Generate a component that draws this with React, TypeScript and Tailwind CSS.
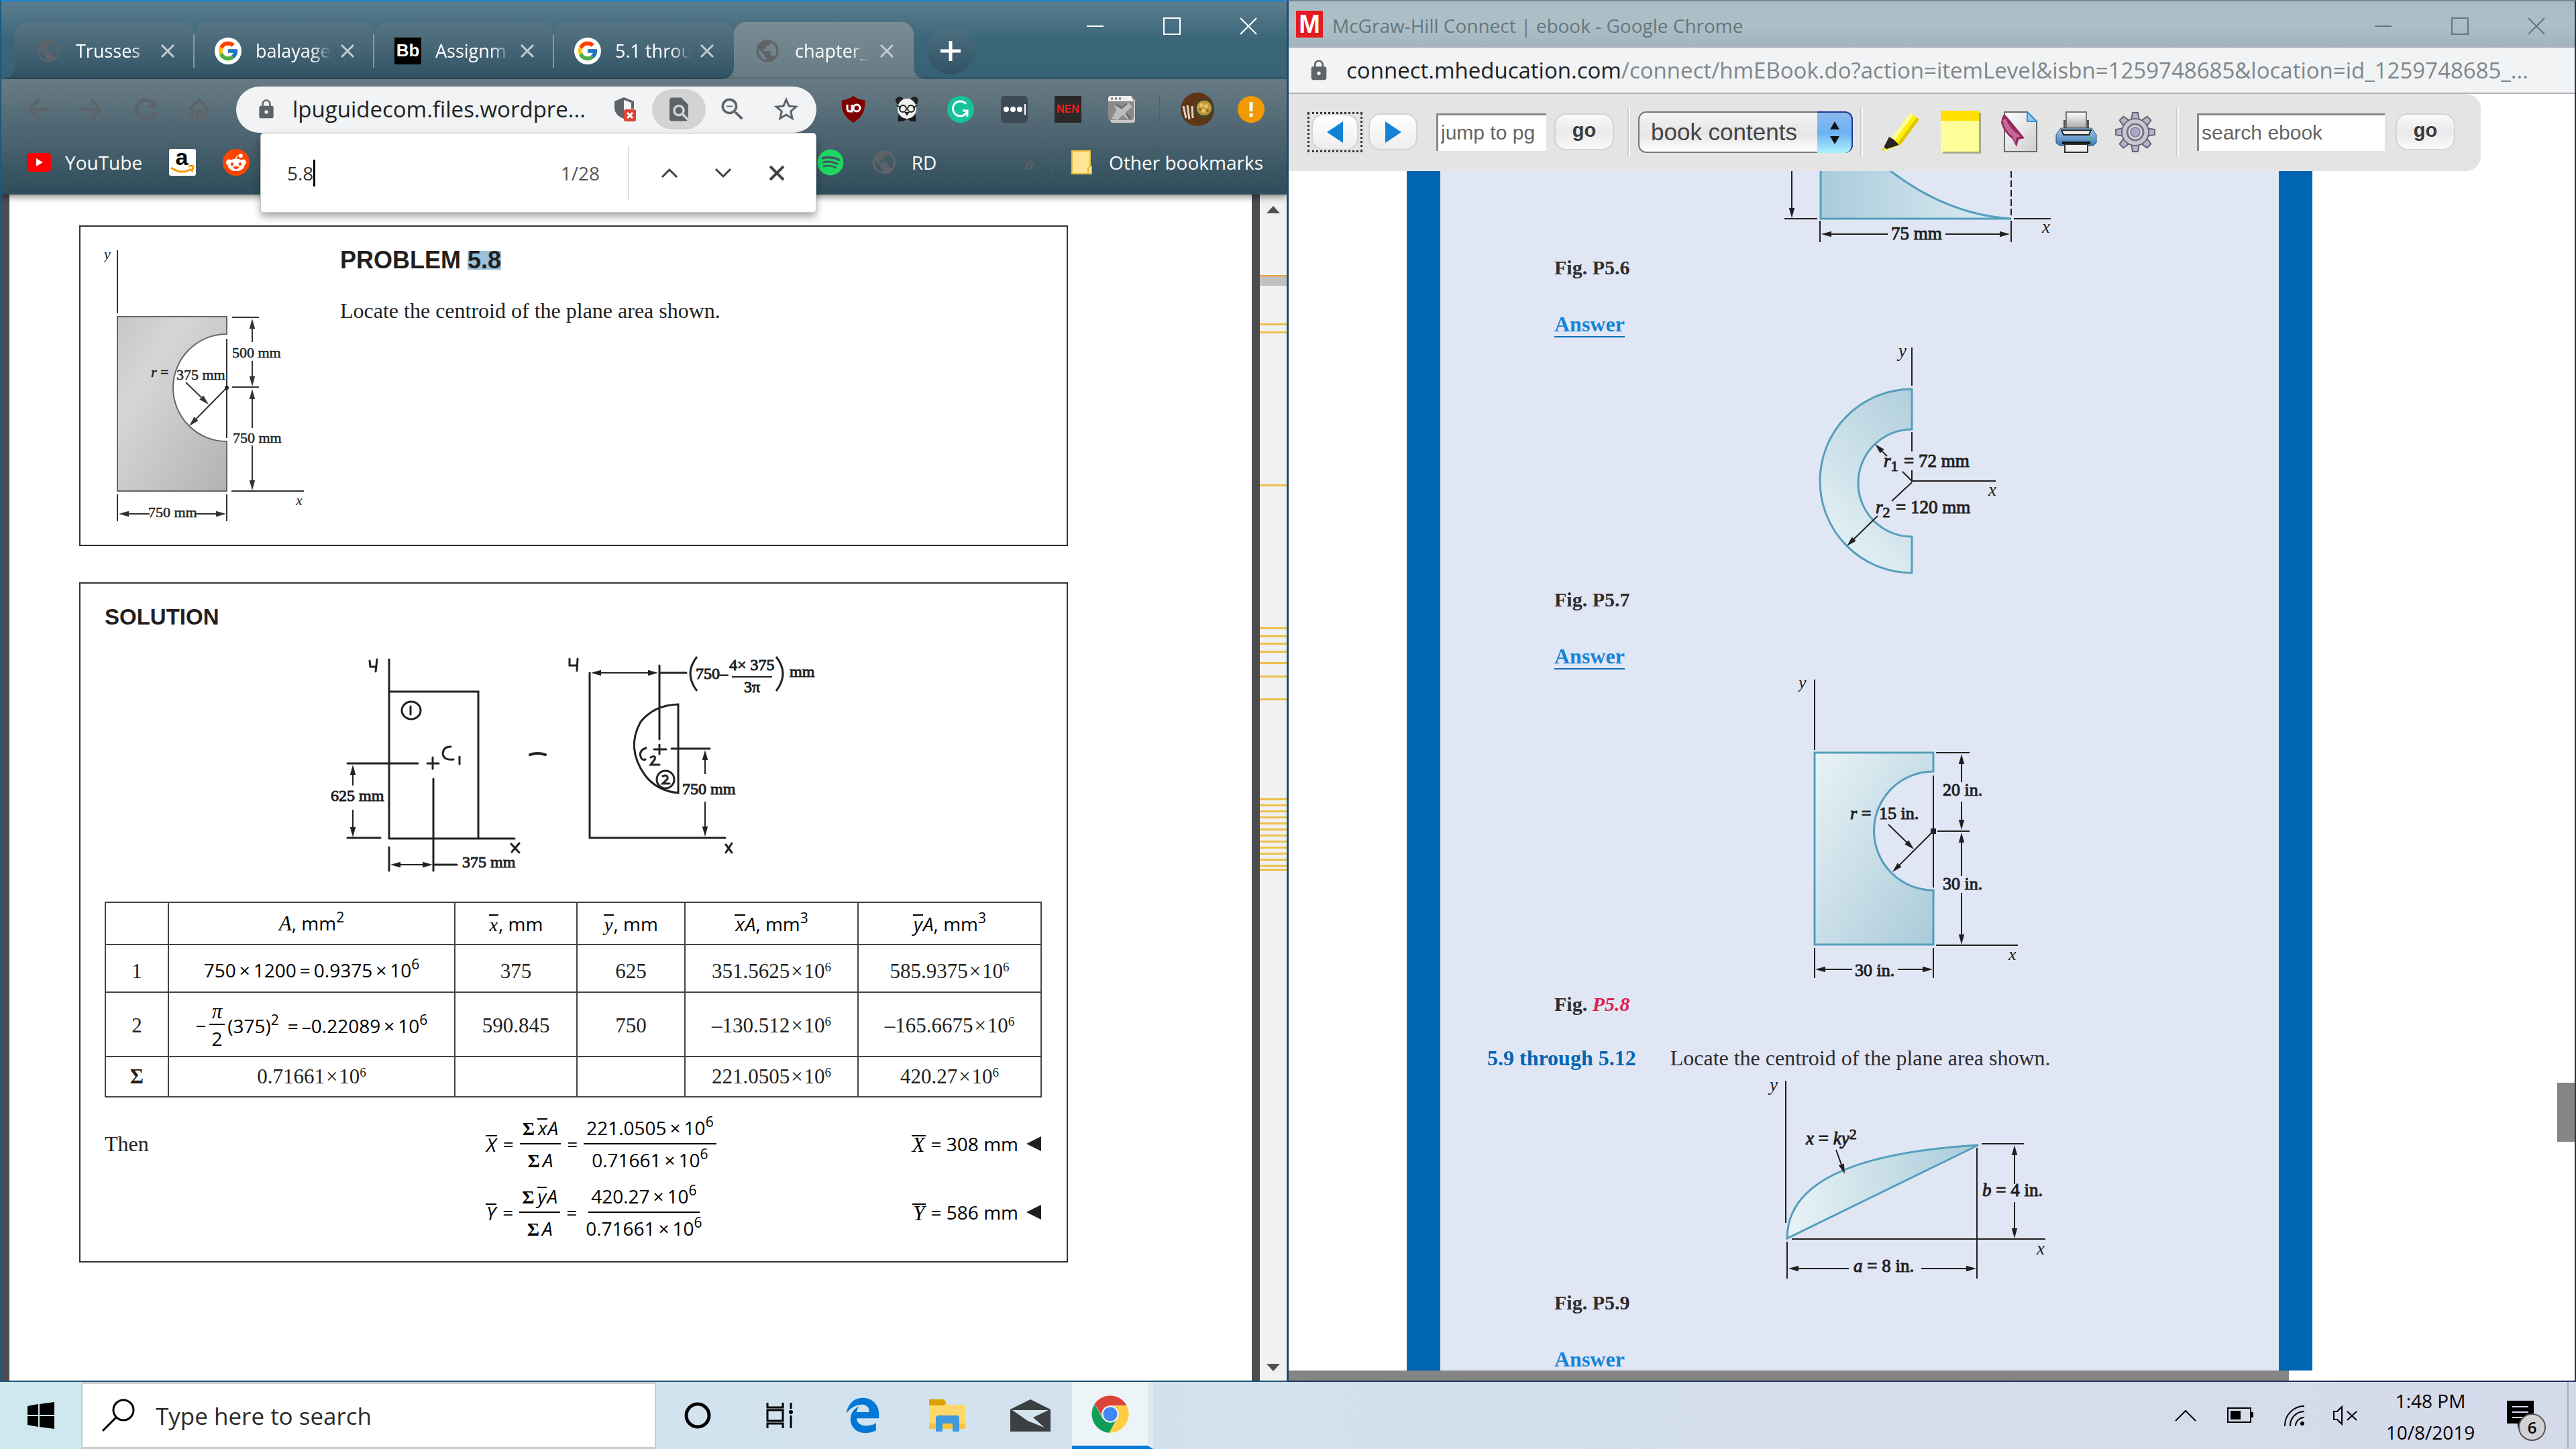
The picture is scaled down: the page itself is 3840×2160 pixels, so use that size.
import React from "react";
import type { ReactNode } from "react";
import { FcGoogle } from "react-icons/fc";
import { FaEdgeLegacy, FaRedditAlien, FaSpotify } from "react-icons/fa6";
import {
  MdArrowBack,
  MdArrowForward,
  MdFindInPage,
  MdLock,
  MdOutlineHome,
  MdPublic,
  MdRefresh,
  MdStarBorder,
  MdZoomOut,
} from "react-icons/md";

const UI = "font-['Open_Sans','Noto_Sans',sans-serif]";
const SERIF = "font-['Liberation_Serif',serif]";
const ARIAL = "font-['Liberation_Sans',sans-serif]";

/* ---------- small helpers ---------- */

function Arrow({ x1, y1, x2, y2, head = 15, color = "#231f20" }: { x1: number; y1: number; x2: number; y2: number; head?: number; color?: string }) {
  const a = Math.atan2(y2 - y1, x2 - x1);
  const bx = x2 - head * Math.cos(a);
  const by = y2 - head * Math.sin(a);
  const w = head * 0.28;
  const pts = `${x2},${y2} ${bx - w * Math.sin(a)},${by + w * Math.cos(a)} ${bx + w * Math.sin(a)},${by - w * Math.cos(a)}`;
  return (
    <g>
      <line x1={x1} y1={y1} x2={bx} y2={by} stroke={color} strokeWidth="2" />
      <polygon points={pts} fill={color} />
    </g>
  );
}

function WindowButtons({ color }: { color: string }) {
  return (
    <div className={`flex h-[74px] shrink-0 items-center ${color}`}>
      <button aria-label="Minimize" className="flex w-[114px] justify-center">
        <svg width="26" height="26" viewBox="0 0 26 26" stroke="currentColor" strokeWidth="2"><path d="M0 13H25" /></svg>
      </button>
      <button aria-label="Maximize" className="flex w-[114px] justify-center">
        <svg width="26" height="26" viewBox="0 0 26 26" fill="none" stroke="currentColor" strokeWidth="2"><rect x="1" y="1" width="24" height="24" /></svg>
      </button>
      <button aria-label="Close" className="flex w-[114px] justify-center">
        <svg width="26" height="26" viewBox="0 0 26 26" stroke="currentColor" strokeWidth="2"><path d="M1 1L25 25M25 1L1 25" /></svg>
      </button>
    </div>
  );
}

/* ---------- left browser chrome ---------- */

function GoogleIcon() {
  return (
    <span className="flex size-10 items-center justify-center rounded-full bg-white">
      <FcGoogle size={34} />
    </span>
  );
}

const globe = <MdPublic size={42} className="text-[#5f6368]" />;

const tabs: { title: string; icon: ReactNode }[] = [
  { title: "Trusses", icon: globe },
  { title: "balayage", icon: <GoogleIcon /> },
  { title: "Assignm", icon: <span className={`flex size-10 items-center justify-center bg-black text-[26px] font-bold text-white ${ARIAL}`}>Bb</span> },
  { title: "5.1 throu", icon: <GoogleIcon /> },
];

function CloseX() {
  return (
    <svg width="22" height="22" viewBox="0 0 22 22" stroke="currentColor" strokeWidth="3"><path d="M2 2L20 20M20 2L2 20" /></svg>
  );
}

function TabBody({ title, icon }: { title: string; icon: ReactNode }) {
  return (
    <>
      <span className="flex w-10 shrink-0 justify-center">{icon}</span>
      <span className="ml-[21px] w-[118px] text-left text-[27px] leading-[40px] whitespace-nowrap text-white [mask-image:linear-gradient(to_right,black_70%,transparent_96%)]">{title}</span>
    </>
  );
}

function TabStrip() {
  return (
    <div className="flex h-[116px] items-start bg-linear-to-b from-[#5a7e8f] via-[#3b6679] via-50% to-[#386377]">
      <div className="flex items-end pt-[31px] pl-[20px]" role="tablist">
        {tabs.map((t, i) => (
          <div key={t.title} className="relative flex h-[85px] w-[268px] items-center rounded-t-[18px] bg-linear-to-b from-[#587583] to-[#305365] pl-[30px]">
            {i === 0 && <span className="absolute bottom-0 -left-[18px] size-[18px] bg-[radial-gradient(circle_at_0_0,transparent_18px,#305365_18px)]" />}
            <button role="tab" className="flex items-center"><TabBody {...t} /></button>
            <button aria-label={`Close ${t.title}`} className="ml-2 text-[#c3ced4]"><CloseX /></button>
            {i < 3 && <span className="absolute top-[18px] right-0 h-[50px] w-[2px] bg-[#8499a3]" />}
          </div>
        ))}
        <div className="relative z-10 flex h-[85px] w-[268px] items-center rounded-t-[18px] bg-linear-to-b from-[#7a8d94] to-[#677b85] pl-[30px]">
          <span className="absolute bottom-0 -left-[18px] size-[18px] bg-[radial-gradient(circle_at_0_0,transparent_18px,#677b85_18px)]" />
          <span className="absolute -right-[18px] bottom-0 size-[18px] bg-[radial-gradient(circle_at_100%_0,transparent_18px,#677b85_18px)]" />
          <button role="tab" className="flex items-center"><TabBody title="chapter_" icon={globe} /></button>
          <button aria-label="Close chapter" className="ml-2 text-[#c3ced4]"><CloseX /></button>
        </div>
        <button aria-label="New tab" className="mb-[7px] ml-[20px] flex size-[70px] items-center justify-center rounded-full bg-linear-to-b from-[#4c7080] to-[#305365]">
          <svg width="30" height="30" viewBox="0 0 30 30" stroke="#fff" strokeWidth="5"><path d="M15 0V30M0 15H30" /></svg>
        </button>
      </div>
      <div className="ml-auto"><WindowButtons color="text-white" /></div>
    </div>
  );
}

function Cell({ children, label }: { children: ReactNode; label: string }) {
  return <button aria-label={label} className="flex h-[69px] w-20 shrink-0 items-center justify-center">{children}</button>;
}

function NavBar() {
  return (
    <div className="flex h-[90px] items-center pr-[13px] pl-[15px]">
      <div className="flex text-[#5f6368]">
        <Cell label="Back"><MdArrowBack size={48} /></Cell>
        <Cell label="Forward"><MdArrowForward size={48} /></Cell>
        <Cell label="Reload"><MdRefresh size={48} /></Cell>
        <Cell label="Home"><MdOutlineHome size={44} /></Cell>
      </div>
      <div className="ml-[15px] flex h-[69px] min-w-0 flex-1 items-center rounded-full bg-[#f1f3f4] pl-[29px] text-[#5f6368]">
        <MdLock size={32} className="shrink-0" />
        <input aria-label="Address" defaultValue="lpuguidecom.files.wordpre..." className="ml-[23px] min-w-0 flex-1 bg-transparent text-[33px] text-[#202124] outline-none" />
        <Cell label="Content blocked">
          <svg width="38" height="38" viewBox="0 0 38 38">
            <path d="M17 1L32 7V18H28V9L17 5V33Q3 28 3 16V7Z" fill="#5f6368" />
            <rect x="17" y="19" width="18" height="18" rx="3" fill="#db4437" />
            <path d="M22 24L30 32M30 24L22 32" stroke="#fff" strokeWidth="3" />
          </svg>
        </Cell>
        <button aria-label="Find in page" className="flex h-[60px] w-20 items-center justify-center rounded-full bg-[#d2d4d3]"><MdFindInPage size={42} /></button>
        <Cell label="Zoom"><MdZoomOut size={44} /></Cell>
        <span className="pr-[5px]"><Cell label="Bookmark"><MdStarBorder size={44} /></Cell></span>
      </div>
      <div className="ml-[15px] flex">
        <Cell label="uBlock">
          <svg width="40" height="40" viewBox="0 0 40 40">
            <path d="M20 0Q28 6 37 6Q40 28 20 40Q0 28 3 6Q12 6 20 0Z" fill="#800000" />
            <path d="M11 13V19Q11 23 15 23H18V13" fill="none" stroke="#fff" strokeWidth="3" />
            <circle cx="25" cy="18" r="5" fill="none" stroke="#fff" strokeWidth="3" />
          </svg>
        </Cell>
        <Cell label="Panda">
          <svg width="40" height="40" viewBox="0 0 40 40">
            <circle cx="9" cy="7" r="6" fill="#222" /><circle cx="31" cy="7" r="6" fill="#222" />
            <path d="M8 25L6 38H15L20 34L26 38H34L32 25Z" fill="#1c1c1c" />
            <ellipse cx="20" cy="19" rx="14" ry="15" fill="#f1f1f1" />
            <circle cx="14" cy="19" r="5" fill="none" stroke="#222" strokeWidth="2" /><circle cx="26" cy="19" r="5" fill="none" stroke="#222" strokeWidth="2" />
            <path d="M5 14L11 18M35 14L29 18M18 25H22L20 28Z" stroke="#222" strokeWidth="2" />
          </svg>
        </Cell>
        <Cell label="Grammarly">
          <svg width="40" height="40" viewBox="0 0 40 40">
            <circle cx="20" cy="20" r="20" fill="#15c39a" />
            <path d="M28 12A11 11 0 1 0 30 22H23M30 22V31" fill="none" stroke="#fff" strokeWidth="3" />
          </svg>
        </Cell>
        <Cell label="Password manager">
          <svg width="40" height="40" viewBox="0 0 40 40">
            <rect width="40" height="40" rx="5" fill="#3e4b57" />
            <circle cx="8" cy="20" r="4" fill="#fff" /><circle cx="18" cy="20" r="4" fill="#fff" /><circle cx="28" cy="20" r="4" fill="#fff" />
            <path d="M36 12V28" stroke="#fff" strokeWidth="2" />
          </svg>
        </Cell>
        <Cell label="New extension"><span className={`flex size-10 items-center justify-center bg-[#2a2829] text-[16px] font-bold text-[#f01e1e] ${ARIAL}`}>NEN</span></Cell>
        <Cell label="Image extension">
          <svg width="40" height="40" viewBox="0 0 40 40">
            <rect x="3" y="4" width="37" height="36" rx="4" fill="#c9c9c9" /><rect width="38" height="36" rx="4" fill="#8b8b8b" />
            <path d="M0 4Q0 0 4 0H34L38 8H0Z" fill="#eee" />
            <path d="M4 4H7M10 4H13M16 4H19" stroke="#777" strokeWidth="3" />
            <path d="M5 34L12 22L9 14L20 20L30 10L36 16L26 24L30 36L22 28L14 36Z" fill="#bdbdbd" />
            <path d="M12 12L20 18L28 12M26 26L34 34" stroke="#666" strokeWidth="2" fill="none" />
          </svg>
        </Cell>
      </div>
      <div className="mx-4 h-10 w-px bg-[#4d626d]" />
      <Cell label="Profile">
        <svg width="50" height="50" viewBox="0 0 50 50">
          <circle cx="25" cy="25" r="25" fill="#5e3517" />
          <path d="M4 20L8 38M10 19L13 40M17 20L18 38" stroke="#ddd4c6" strokeWidth="3" />
          <circle cx="35" cy="24" r="14" fill="#3c4a24" /><circle cx="35" cy="23" r="11" fill="#c29a3e" />
          <circle cx="31" cy="19" r="3" fill="#e6c466" /><circle cx="38" cy="20" r="3" fill="#e6c466" /><circle cx="34" cy="27" r="3" fill="#e6c466" /><circle cx="40" cy="27" r="2" fill="#8f6a1e" /><circle cx="29" cy="25" r="2" fill="#8f6a1e" />
        </svg>
      </Cell>
      <Cell label="Update">
        <svg width="40" height="40" viewBox="0 0 40 40"><circle cx="20" cy="20" r="20" fill="#f29900" /><path d="M20 9V23M20 26V31" stroke="#fff" strokeWidth="5" /></svg>
      </Cell>
    </div>
  );
}

function BookmarkBar() {
  return (
    <div className="flex h-[68px] items-center pr-[35px] pl-[38px] text-[28px] text-white">
      <a href="#youtube" className="flex items-center gap-[21px]">
        <svg width="36" height="28" viewBox="0 0 36 28"><rect width="36" height="28" rx="5" fill="#f00" /><path d="M14 8L24 14L14 20Z" fill="#fff" /></svg>
        YouTube
      </a>
      <a href="#amazon" aria-label="Amazon" className="ml-[40px]">
        <svg width="40" height="40" viewBox="0 0 40 40">
          <rect width="40" height="40" rx="3" fill="#fff" />
          <text x="19" y="24" textAnchor="middle" fontSize="34" fontWeight="bold" fontFamily="Liberation Sans, sans-serif">a</text>
          <path d="M3 28Q18 39 33 30M29 26Q37 24 36 27L34 34" fill="none" stroke="#f90" strokeWidth="3" />
        </svg>
      </a>
      <a href="#reddit" aria-label="Reddit" className="ml-10 flex size-10 items-center justify-center rounded-full bg-[#ff4500]"><FaRedditAlien size={30} /></a>
      <a href="#spotify" aria-label="Spotify" className="ml-auto"><FaSpotify size={40} className="text-[#1ed760]" /></a>
      <a href="#rd" className="ml-[39px] flex items-center gap-[20px]">{globe}RD</a>
      <button aria-label="More bookmarks" className="ml-[129px] text-[34px] leading-none text-[#5f6368]">»</button>
      <div className="mx-[27px] h-10 w-px bg-[#465f6b]" />
      <button className="flex items-center gap-[25px]">
        <svg width="31" height="36" viewBox="0 0 31 36"><path d="M1 1H28V24H30V35H1Z" fill="#ffe591" stroke="#e9bd3c" strokeWidth="2" /><path d="M25 35V26L28 24" fill="none" stroke="#e9bd3c" strokeWidth="2" /></svg>
        Other bookmarks
      </button>
    </div>
  );
}

function FindBox() {
  return (
    <div className="absolute top-[196px] left-[386px] z-20 flex h-[119px] w-[829px] items-center rounded-[5px] border border-[#c6c9cb] bg-white pl-[39px] text-[28px] text-[#333] shadow-[0_6px_12px_rgba(0,0,0,0.35)]">
      <div className="flex flex-1 items-center">
        <span>5.8</span>
        <span className="h-10 w-[3px] bg-black" />
      </div>
      <span className="mr-[42px] text-[#555]">1/28</span>
      <div className="h-20 w-px bg-[#ccc]" />
      <div className="flex pr-[18px] pl-[21px] text-[#404346]">
        <Cell label="Previous"><svg width="26" height="16" viewBox="0 0 26 16" fill="none" stroke="currentColor" strokeWidth="3"><path d="M2 14L13 3L24 14" /></svg></Cell>
        <Cell label="Next"><svg width="26" height="16" viewBox="0 0 26 16" fill="none" stroke="currentColor" strokeWidth="3"><path d="M2 2L13 13L24 2" /></svg></Cell>
        <Cell label="Close find bar"><svg width="24" height="24" viewBox="0 0 24 24" stroke="currentColor" strokeWidth="4"><path d="M2 2L22 22M22 2L2 22" /></svg></Cell>
      </div>
    </div>
  );
}

/* ---------- PDF page ---------- */

function ProblemFigure() {
  const g = "#333";
  return (
    <svg width="298" height="404" viewBox="156 373 298 404" fontFamily="Liberation Serif, serif" fontSize="22" fill="#222" className="shrink-0">
      <defs>
        <linearGradient id="gray" x1="0" y1="0" x2="1" y2="1"><stop offset="0" stopColor="#c6c6c6" /><stop offset=".3" stopColor="#d6d6d6" /><stop offset="1" stopColor="#b2b2b2" /></linearGradient>
      </defs>
      <text x="156" y="386" fontStyle="italic">y</text>
      <path d="M339 472H176V732H339V658A80 80 0 0 1 339 498Z" fill="url(#gray)" stroke="#666" strokeWidth="2" />
      <path d="M176 373V467M339 505V653M347 473H387M347 577H387M346 732H454M176 737V777M339 737V777" stroke={g} strokeWidth="2" />
      <Arrow x1={377} y1={510} x2={377} y2={475} color={g} />
      <Arrow x1={377} y1={538} x2={377} y2={576} color={g} />
      <Arrow x1={377} y1={638} x2={377} y2={580} color={g} />
      <Arrow x1={377} y1={664} x2={377} y2={731} color={g} />
      <Arrow x1={278} y1={570} x2={312} y2={603} color={g} />
      <Arrow x1={339} y1={578} x2={283} y2={635} color={g} />
      <Arrow x1={224} y1={766} x2={178} y2={766} color={g} />
      <Arrow x1={291} y1={766} x2={338} y2={766} color={g} />
      <circle cx="339" cy="578" r="3" />
      <g stroke="#222" strokeWidth="0.500">
        <text x="347" y="533">500 mm</text>
        <text x="348" y="660">750 mm</text>
        <text x="226" y="562"><tspan fontStyle="italic">r</tspan> =</text>
        <text x="264" y="566">375 mm</text>
        <text x="222" y="771">750 mm</text>
      </g>
      <text x="442" y="753" fontStyle="italic">x</text>
    </svg>
  );
}

function SolutionSketch() {
  const hand = { fill: "none", stroke: "#222", strokeWidth: 3, strokeLinecap: "round" as const };
  const c = "#222";
  return (
    <svg width="728" height="326" viewBox="494 973 728 326" fontFamily="Liberation Serif, serif" fontSize="24" fill="#222" className="ml-[337px]">
      <g {...hand}>
        <path d="M581 982V1249M581 1030H714V1249M581 1249H768M519 1137H624M519 1248H568M647 1160V1297M581 1262V1297M647 1288H682" />
        <path d="M552 984L553 993H562M563 982L561 1000M763 1257L775 1270M775 1256L764 1269" />
        <ellipse cx="614" cy="1058" rx="14" ry="13" /><path d="M613 1052V1064" />
        <path d="M646 1128V1145M638 1137H655M673 1112Q662 1112 661 1122Q662 1133 677 1131M686 1127V1138" />
        <path d="M791 1124Q802 1120 814 1124" strokeWidth="4" />
        <path d="M850 981L850 991L860 991M862 981L861 999M880 1002V1248M880 1248H1082M984 991V1101M984 1002H1024M1002 1115H1059" />
        <path d="M1012 1049V1181Q980 1178 962 1154Q934 1114 956 1075Q976 1050 1012 1049Z" />
        <path d="M984 1109V1123M976 1116H994M964 1114Q953 1118 956 1127Q958 1133 963 1131M971 1128Q979 1124 977 1131L971 1139H984" />
        <ellipse cx="993" cy="1161" rx="13" ry="13" /><path d="M989 1156Q997 1153 996 1160L989 1167H999" />
        <path d="M1083 1258L1092 1270M1092 1256L1083 1270" />
      </g>
      <Arrow x1={527} y1={1170} x2={527} y2={1139} color={c} />
      <Arrow x1={527} y1={1206} x2={527} y2={1247} color={c} />
      <Arrow x1={614} y1={1288} x2={583} y2={1288} color={c} />
      <Arrow x1={614} y1={1288} x2={646} y2={1288} color={c} />
      <Arrow x1={930} y1={1002} x2={882} y2={1002} color={c} />
      <Arrow x1={930} y1={1002} x2={982} y2={1002} color={c} />
      <Arrow x1={1052} y1={1153} x2={1052} y2={1117} color={c} />
      <Arrow x1={1052} y1={1194} x2={1052} y2={1246} color={c} />
      <g stroke="#222" strokeWidth="1">
        <text x="494" y="1193">625 mm</text>
        <text x="690" y="1292">375 mm</text>
        <text x="1018" y="1183">750 mm</text>
        <text x="1038" y="1011">750–</text>
        <text x="1088" y="998">4× 375</text>
        <text x="1110" y="1031">3π</text>
        <text x="1178" y="1008">mm</text>
      </g>
      <path d="M1040 978Q1020 1003 1040 1029M1158 978Q1178 1003 1158 1029" fill="none" stroke="#222" strokeWidth="3" />
      <path d="M1092 1008H1152" stroke="#222" strokeWidth="2" />
    </svg>
  );
}

function Bar({ children }: { children: ReactNode }) {
  return <span className="inline-block border-t-2 border-black px-px leading-[24px] italic">{children}</span>;
}
function Sup({ children }: { children: ReactNode }) {
  return <sup className="-top-[12px] text-[21px]">{children}</sup>;
}
function Op({ children }: { children: ReactNode }) {
  return <span className="mx-[5px]">{children}</span>;
}
function Frac({ top, bottom }: { top: ReactNode; bottom: ReactNode }) {
  return (
    <span className="inline-flex flex-col items-center text-center">
      <span className="h-[48px] border-b-2 border-black px-1 leading-[46px] whitespace-nowrap">{top}</span>
      <span className="h-[46px] px-1 leading-[46px] whitespace-nowrap">{bottom}</span>
    </span>
  );
}
const Sigma = () => <span className={`mr-[4px] font-bold ${SERIF}`}>Σ</span>;
const Ten = () => <><span className="mx-[2px]">×</span>10<sup className="-top-[10px] text-[19px]">6</sup></>;

function ResultsTable() {
  const td = "border-2 border-[#444] p-0 text-center font-normal whitespace-nowrap";
  const it = `italic ${SERIF}`;
  return (
    <table className={`mt-[44px] w-full table-fixed border-collapse text-[31px] leading-[40px] text-[#231f20] ${SERIF}`}>
      <colgroup>
        <col className="w-[94px]" /><col className="w-[427px]" /><col className="w-[182px]" /><col className="w-[161px]" /><col className="w-[258px]" /><col className="w-[273px]" />
      </colgroup>
      <thead>
        <tr className={`h-[63px] text-[28px] text-black ${UI}`}>
          <th className={td}></th>
          <th className={td}><span className={`text-[31px] ${it}`}>A</span>, mm<Sup>2</Sup></th>
          <th className={td}><Bar><span className={SERIF}>x</span></Bar>, mm</th>
          <th className={td}><Bar><span className={SERIF}>y</span></Bar>, mm</th>
          <th className={td}><Bar>x</Bar><i>A</i>, mm<Sup>3</Sup></th>
          <th className={td}><Bar>y</Bar><i>A</i>, mm<Sup>3</Sup></th>
        </tr>
      </thead>
      <tbody>
        <tr className="h-[71px]">
          <td className={`${td} pt-2`}>1</td>
          <td className={`${td} pt-1 text-[28px] text-black ${UI}`}>750<Op>×</Op>1200<Op>=</Op>0.9375<Op>×</Op>10<Sup>6</Sup></td>
          <td className={`${td} pt-2`}>375</td><td className={`${td} pt-2`}>625</td>
          <td className={`${td} pt-2`}>351.5625<Ten /></td><td className={`${td} pt-2`}>585.9375<Ten /></td>
        </tr>
        <tr className="h-[96px]">
          <td className={`${td} pt-1`}>2</td>
          <td className={`${td} text-[28px] text-black ${UI}`}>
            <div className="flex items-center justify-center pt-1">
              <span>−</span>
              <span className="mx-1 inline-flex flex-col text-center"><span className={`border-b-2 border-black px-1 text-[31px] leading-[36px] ${it}`}>π</span><span className="leading-[40px]">2</span></span>
              <span>(375)<Sup>2</Sup><span className="ml-[8px]"><Op>=</Op></span>–0.22089<Op>×</Op>10<Sup>6</Sup></span>
            </div>
          </td>
          <td className={`${td} pt-1`}>590.845</td><td className={`${td} pt-1`}>750</td>
          <td className={`${td} pt-1`}>–130.512<Ten /></td><td className={`${td} pt-1`}>–165.6675<Ten /></td>
        </tr>
        <tr className="h-[60px]">
          <td className={td}><b>Σ</b></td>
          <td className={td}>0.71661<Ten /></td><td className={td}></td><td className={td}></td>
          <td className={td}>221.0505<Ten /></td><td className={td}>420.27<Ten /></td>
        </tr>
      </tbody>
    </table>
  );
}

function Result({ v, n }: { v: string; n: string }) {
  return (
    <span className="flex items-center">
      <Bar><span className={`text-[31px] ${SERIF}`}>{v}</span></Bar>
      <span className="ml-2">= {n} mm</span>
      <svg width="22" height="22" viewBox="0 0 22 22" className="ml-[12px]"><path d="M0 11L22 0V22Z" fill="#231f20" /></svg>
    </span>
  );
}

function EquationRow({ lead, big, small, top, n }: { lead?: string; big: string; small: string; top: string; n: string }) {
  return (
    <div className={`flex items-center text-[28px] leading-[40px] text-black ${UI}`}>
      <span className={`w-[568px] text-[32px] text-[#231f20] ${SERIF}`}>{lead}</span>
      <span className="flex flex-1 items-center">
        <Bar>{big}</Bar>
        <span className="mx-[9px]">=</span>
        <Frac top={<><Sigma /><Bar>{small}</Bar><i>A</i></>} bottom={<><Sigma /><i>A</i></>} />
        <span className="mx-[9px]">=</span>
        <Frac top={<>{top}<Op>×</Op>10<Sup>6</Sup></>} bottom={<>0.71661<Op>×</Op>10<Sup>6</Sup></>} />
      </span>
      <Result v={big} n={n} />
    </div>
  );
}

function PdfPage() {
  return (
    <div className="min-w-0 flex-1 overflow-hidden bg-white pt-[46px] pr-[274px] pl-[104px]">
      <section className="flex border-2 border-[#333] px-[35px] pt-[35px] pb-[35px]">
        <ProblemFigure />
        <div className="-mt-[5px] ml-[54px] text-[#231f20]">
          <h1 className={`text-[36px] leading-[40px] font-bold ${ARIAL}`}>PROBLEM <mark className="inline-block h-7 bg-[#99c1da] leading-[28px] text-[#231f20]">5.8</mark></h1>
          <p className={`mt-[35px] text-[32px] leading-[40px] ${SERIF}`}>Locate the centroid of the plane area shown.</p>
        </div>
      </section>
      <section className="mt-[54px] border-2 border-[#333] pt-[30px] pr-[38px] pb-[26px] pl-[36px]">
        <h2 className={`mb-[34px] text-[33px] leading-[40px] font-bold text-[#231f20] ${ARIAL}`}>SOLUTION</h2>
        <SolutionSketch />
        <ResultsTable />
        <div className="mt-[22px] flex flex-col gap-2">
          <EquationRow lead="Then" big="X" small="x" top="221.0505" n="308" />
          <EquationRow big="Y" small="y" top="420.27" n="586" />
        </div>
      </section>
    </div>
  );
}

const findMarks = [192, 204, 432, 645, 657, 668, 680, 697, 717, 751, 900, 909, 918, 927, 936, 945, 954, 963, 972, 981, 990, 999, 1005];

function PdfScrollbar() {
  return (
    <div className="relative flex w-10 shrink-0 flex-col items-center justify-between bg-[#f1f1f1] pt-[17px] pb-[14px]">
      <svg width="20" height="11" viewBox="0 0 20 11"><path d="M0 11L10 0L20 11Z" fill="#505050" /></svg>
      <svg width="20" height="11" viewBox="0 0 20 11"><path d="M0 0L10 11L20 0Z" fill="#505050" /></svg>
      <span className="absolute top-[120px] left-0 h-[16px] w-full border-t-2 border-[#e8a13a] bg-[#c1c1c1]" />
      {findMarks.map((m) => (
        <span key={m} className="absolute left-0 h-[3px] w-full bg-[#edc04b]" style={{ top: m }} />
      ))}
    </div>
  );
}

function PdfWindow() {
  return (
    <section aria-label="PDF viewer" className={`relative flex w-1/2 flex-col overflow-hidden border-t-2 border-r-2 border-b-2 border-l-2 border-t-[#1883d7] border-r-[#1f4a68] border-b-[#1b5572] border-l-[#1c5a7c] ${UI}`}>
      <TabStrip />
      <div className="relative z-10 shrink-0 bg-linear-to-b from-[#677b85] via-[#4c6470] via-50% to-[#2e4c5a] pb-[14px] shadow-[0_3px_10px_rgba(0,0,0,0.5)]">
        <NavBar />
        <BookmarkBar />
      </div>
      <FindBox />
      <div className="flex min-h-0 flex-1">
        <div className="w-3 shrink-0 bg-[#4a4c4f]" />
        <PdfPage />
        <div className="w-3 shrink-0 bg-[#4a4c4f]" />
        <PdfScrollbar />
      </div>
    </section>
  );
}

/* ---------- ebook window ---------- */

const figText = { fontFamily: "Liberation Serif, serif", fontSize: 27, fill: "#231f20" };
const ink = { fill: "none", stroke: "#231f20", strokeWidth: 2 };
const edge = { stroke: "#559fba", strokeWidth: 3 };

function Fig56() {
  return (
    <svg width="400" height="106" viewBox="2660 255 400 106" {...figText} className="ml-[513px]">
      <defs><linearGradient id="g56"><stop offset="0" stopColor="#a9cbdd" /><stop offset="1" stopColor="#e0eef2" /></linearGradient></defs>
      <path d="M2714 250V326H2998Q2900 320 2812 250Z" fill="url(#g56)" {...edge} />
      <path d="M2660 326H2709M3002 326H3057M2713 329V361M2998 329V361" {...ink} />
      <path d="M2998 255V323" {...ink} strokeDasharray="10 4" />
      <Arrow x1={2671} y1={250} x2={2671} y2={325} />
      <Arrow x1={2814} y1={349} x2={2715} y2={349} />
      <Arrow x1={2900} y1={349} x2={2996} y2={349} />
      <text x="2819" y="357" stroke="#231f20" strokeWidth="1">75 mm</text>
      <text x="3044" y="347" fontStyle="italic">x</text>
    </svg>
  );
}

function Fig57() {
  return (
    <svg width="290" height="338" viewBox="2708 519 290 338" {...figText} className="mt-[15px] ml-[561px]">
      <defs><linearGradient id="g57" x1=".9" y1="0" x2=".4" y2="1"><stop offset="0" stopColor="#b3d0de" /><stop offset="1" stopColor="#e4f1f4" /></linearGradient></defs>
      <path d="M2850 581A137 137 0 0 0 2850 855V801A80 80 0 0 1 2850 641Z" fill="url(#g57)" {...edge} />
      <path d="M2850 519V576M2850 645V674M2850 702V718H2975M2850 718L2836 704M2850 720L2820 748" {...ink} />
      <Arrow x1={2813} y1={681} x2={2795} y2={663} />
      <Arrow x1={2799} y1={770} x2={2753} y2={815} />
      <text x="2830" y="533" fontStyle="italic">y</text>
      <text x="2964" y="740" fontStyle="italic">x</text>
      <g stroke="#231f20" strokeWidth="1">
        <text x="2808" y="697"><tspan fontStyle="italic">r</tspan><tspan dy="6" fontSize="22">1</tspan></text>
        <text x="2838" y="697">= 72 mm</text>
        <text x="2796" y="766"><tspan fontStyle="italic">r</tspan><tspan dy="6" fontSize="22">2</tspan></text>
        <text x="2826" y="766">= 120 mm</text>
      </g>
    </svg>
  );
}

function Fig58() {
  return (
    <svg width="330" height="446" viewBox="2680 1015 330 446" {...figText} fontSize={26} className="mt-[15px] ml-[533px]">
      <defs><linearGradient id="g58" x1="0" y1="0" x2="1" y2="1"><stop offset="0" stopColor="#e9f3f6" /><stop offset="1" stopColor="#a9cad9" /></linearGradient></defs>
      <path d="M2882 1124H2705V1410H2882V1329A88 88 0 0 1 2882 1152Z" fill="url(#g58)" {...edge} />
      <path d="M2705 1015V1120M2882 1158V1325M2886 1124H2936M2888 1241H2936M2886 1411H3008M2705 1415V1460M2882 1415V1460" {...ink} />
      <Arrow x1={2924} y1={1168} x2={2924} y2={1126} />
      <Arrow x1={2924} y1={1197} x2={2924} y2={1239} />
      <Arrow x1={2924} y1={1308} x2={2924} y2={1243} />
      <Arrow x1={2924} y1={1333} x2={2924} y2={1410} />
      <Arrow x1={2815} y1={1231} x2={2853} y2={1268} />
      <Arrow x1={2882} y1={1241} x2={2821} y2={1302} />
      <Arrow x1={2761} y1={1447} x2={2706} y2={1447} />
      <Arrow x1={2829} y1={1447} x2={2881} y2={1447} />
      <rect x="2878" y="1237" width="8" height="8" />
      <text x="2681" y="1028" fontStyle="italic">y</text>
      <text x="2994" y="1433" fontStyle="italic">x</text>
      <g stroke="#231f20" strokeWidth="1">
        <text x="2896" y="1188">20 in.</text>
        <text x="2896" y="1328">30 in.</text>
        <text x="2758" y="1223"><tspan fontStyle="italic">r</tspan> =</text>
        <text x="2801" y="1223">15 in.</text>
        <text x="2765" y="1457">30 in.</text>
      </g>
    </svg>
  );
}

function Fig59() {
  return (
    <svg width="420" height="296" viewBox="2636 1612 420 296" {...figText} className="mt-[16px] -mb-[3px] ml-[489px]">
      <defs><linearGradient id="g59"><stop offset="0" stopColor="#e9f3f6" /><stop offset="1" stopColor="#a9cbd9" /></linearGradient></defs>
      <path d="M2664 1847Q2664 1725 2949 1708Z" fill="url(#g59)" {...edge} />
      <path d="M2662 1612V1824M2671 1848H3049M2954 1706H3017M2947 1712V1907M2664 1852V1907" {...ink} />
      <Arrow x1={2737} y1={1715} x2={2750} y2={1751} />
      <Arrow x1={3003} y1={1766} x2={3003} y2={1708} />
      <Arrow x1={3003} y1={1793} x2={3003} y2={1847} />
      <Arrow x1={2756} y1={1892} x2={2666} y2={1892} />
      <Arrow x1={2864} y1={1892} x2={2946} y2={1892} />
      <text x="2638" y="1627" fontStyle="italic">y</text>
      <text x="3036" y="1871" fontStyle="italic">x</text>
      <g stroke="#231f20" strokeWidth="1">
        <text x="2692" y="1707"><tspan fontStyle="italic">x</tspan> = <tspan fontStyle="italic">ky</tspan><tspan dy="-8" fontSize="22">2</tspan></text>
        <text x="2955" y="1784"><tspan fontStyle="italic">b</tspan> = 4 in.</text>
        <text x="2763" y="1897"><tspan fontStyle="italic">a</tspan> = 8 in.</text>
      </g>
    </svg>
  );
}

function Caption({ children }: { children: ReactNode }) {
  return <p className="mt-[20px] ml-[170px] text-[30px] leading-[36px] font-bold">{children}</p>;
}
function Answer() {
  return (
    <a href="#answer" className="mt-[48px] ml-[170px] block w-fit border-b-2 border-[#0f6fb9] text-[32px] leading-[36px] font-bold text-[#1583d8]">Answer</a>
  );
}

function GoButton({ label }: { label: string }) {
  return (
    <button aria-label={label} className={`h-[55px] w-[89px] rounded-[18px] border-2 border-[#d4d4d4] bg-linear-to-b from-[#fafafa] via-[#eaeaea] to-[#fafafa] pb-1 text-[29px] leading-none font-bold text-[#3a3a3a] ${ARIAL}`}>go</button>
  );
}
const Divider = ({ className = "" }: { className?: string }) => <div className={`h-[75px] w-1 shrink-0 border-l-2 border-[#cfcfcf] bg-white ${className}`} />;
const field = `h-[56px] shrink-0 border-t-[3px] border-l-[3px] border-[#888] bg-white px-1 text-[30px] text-[#666] outline-none placeholder:text-[#666] placeholder:opacity-100 ${ARIAL}`;

function EbookToolbar() {
  return (
    <div className="flex h-[115px] w-[1777px] max-w-full items-center rounded-r-[22px] bg-[#e4e4e4] pb-[2px] pl-[28px]">
      <div className="shrink-0 border-[3px] border-dotted border-[#333] px-[3px]">
        <button aria-label="Previous page" className="flex h-[54px] w-[70px] items-center justify-center rounded-[18px] border-2 border-[#d4d4d4] bg-linear-to-b from-white to-[#ededed]">
          <svg width="24" height="32" viewBox="0 0 24 32"><path d="M0 16L24 0V32Z" fill="#1383d6" /></svg>
        </button>
      </div>
      <button aria-label="Next page" className="ml-[9px] flex h-[55px] w-[73px] shrink-0 items-center justify-center rounded-[18px] border-2 border-[#d4d4d4] bg-linear-to-b from-white to-[#ededed]">
        <svg width="24" height="32" viewBox="0 0 24 32"><path d="M24 16L0 0V32Z" fill="#1383d6" /></svg>
      </button>
      <input aria-label="Page number" placeholder="jump to pg" className={`ml-[28px] w-[164px] ${field}`} />
      <div className="ml-[12px] shrink-0"><GoButton label="Go to page" /></div>
      <Divider className="ml-[20px]" />
      <div className="relative ml-[12px] shrink-0">
        <select aria-label="Book contents" className={`h-[62px] w-[320px] appearance-none rounded-[12px] border-2 border-[#777] bg-linear-to-b from-[#f4f4f4] via-[#e6e6e6] via-55% to-white pl-[17px] text-[35px] leading-none text-[#444] ${ARIAL}`}>
          <option>book contents</option>
        </select>
        <span className="pointer-events-none absolute top-0 right-0 flex h-[62px] w-[53px] items-center justify-center rounded-r-[12px] border-t-2 border-r-2 border-[#1f3c96] bg-linear-to-b from-[#8db8ee] via-[#6cb2f2] to-[#aef0ff]">
          <svg width="14" height="34" viewBox="0 0 14 34"><path d="M7 0L14 12H0ZM7 34L14 22H0Z" fill="#111" /></svg>
        </span>
      </div>
      <Divider className="ml-[11px]" />
      <button aria-label="Highlight" className="ml-[24px] shrink-0">
        <svg width="66" height="62" viewBox="0 0 66 62">
          <path d="M10 58L18 40L47 2L60 12L32 50Z" fill="#fff200" />
          <path d="M18 40L47 2L51 5L23 44Z" fill="#fffb9a" /><path d="M56 9L60 12L32 50L28 47Z" fill="#e0c400" />
          <path d="M5 58L15 38L22 42L30 50L12 56Z" fill="#2b2426" /><path d="M5 60L7 53L12 57Z" fill="#fff200" />
        </svg>
      </button>
      <button aria-label="Add note" className="ml-[26px] shrink-0">
        <svg width="60" height="64" viewBox="0 0 60 64"><rect x="3" y="3" width="57" height="61" fill="#a9a990" /><rect width="57" height="61" fill="#ffff99" /><rect width="57" height="15" fill="#ffde00" /></svg>
      </button>
      <button aria-label="Bookmark page" className="ml-[27px] shrink-0">
        <svg width="58" height="64" viewBox="0 0 58 64">
          <defs><linearGradient id="page" x1="0" y1="0" x2="1" y2="1"><stop offset="0" stopColor="#fff" /><stop offset="1" stopColor="#ccc" /></linearGradient></defs>
          <path d="M8 2H42L56 16V61H8Z" fill="url(#page)" stroke="#6a6a6a" strokeWidth="2" />
          <path d="M42 2L56 16H42Z" fill="#8fc9f5" stroke="#3b8fcf" strokeWidth="2" />
          <path d="M8 5Q4 8 3 18Q8 34 20 42L26 54L29 43L38 41L16 14Z" fill="#962a60" /><path d="M5 14Q8 30 20 38L24 48L26 40L32 38Q16 28 10 12Z" fill="#c7689a" />
        </svg>
      </button>
      <button aria-label="Print" className="ml-[26px] shrink-0">
        <svg width="62" height="64" viewBox="0 0 62 64">
          <defs>
            <linearGradient id="sheet" x1="0" y1="0" x2="0" y2="1"><stop offset="0" stopColor="#fff" /><stop offset="1" stopColor="#a9a9a9" /></linearGradient>
            <linearGradient id="body" x1="0" y1="0" x2="0" y2="1"><stop offset="0" stopColor="#a8cdf0" /><stop offset="1" stopColor="#3f78b8" /></linearGradient>
          </defs>
          <path d="M12 14H50V32H12Z" fill="#555" /><path d="M16 2H46V26H16Z" fill="url(#sheet)" stroke="#777" strokeWidth="2" />
          <path d="M8 26H54L61 36V48L56 52H6L1 48V36Z" fill="url(#body)" stroke="#2d4d74" />
          <path d="M9 29H53L50 36H12Z" fill="#e8e8e8" stroke="#222" strokeWidth="2" />
          <path d="M10 48H52" stroke="#111" strokeWidth="4" /><path d="M14 50H48V62H14Z" fill="#eee" stroke="#333" strokeWidth="2" /><circle cx="52" cy="42" r="2" fill="#29d22c" />
        </svg>
      </button>
      <button aria-label="Settings" className="ml-[26px] shrink-0">
        <svg width="62" height="62" viewBox="0 0 62 62">
          <g fill="#b4b3cc" stroke="#66656f" strokeWidth="2">
            {[0, 45, 90, 135, 180, 225, 270, 315].map((r) => (
              <path key={r} d="M25 14L27 2H35L37 14Z" transform={`rotate(${r} 31 31)`} />
            ))}
            <circle cx="31" cy="31" r="20" />
          </g>
          <circle cx="31" cy="31" r="19" fill="#c9c8d6" /><circle cx="31" cy="31" r="12" fill="#dcdce0" stroke="#77757f" strokeWidth="3" />
          <circle cx="31" cy="31" r="7" fill="#aaa8c9" stroke="#8a889c" strokeWidth="2" />
        </svg>
      </button>
      <Divider className="ml-[30px]" />
      <input aria-label="Search ebook" placeholder="search ebook" className={`ml-[27px] w-[280px] ${field}`} />
      <div className="ml-[16px] shrink-0"><GoButton label="Search" /></div>
    </div>
  );
}

function EbookWindow() {
  return (
    <section aria-label="McGraw-Hill Connect ebook" className={`flex w-1/2 flex-col overflow-hidden border-t-2 border-r-2 border-b-2 border-l border-t-[#78868b] border-r-[#1f3358] border-b-[#1f3560] border-l-[#1f4a68] bg-white ${UI}`}>
      <header className="flex h-[68px] shrink-0 items-center bg-linear-to-b from-[#a9bcc3] via-[#adc0c7] to-[#a2b5bf] pl-[11px] text-[#66767c]">
        <span className={`flex size-10 items-center justify-center bg-[#e31b23] text-[38px] font-bold text-white ${ARIAL}`}>M</span>
        <h1 className="ml-[14px] pt-[3px] text-[28px]">McGraw-Hill Connect | ebook - Google Chrome</h1>
        <div className="ml-auto self-start"><WindowButtons color="text-[#66767c]" /></div>
      </header>
      <div className="flex h-[70px] shrink-0 items-center border-t border-b-2 border-t-[#a8a9ad] border-b-[#b0b1b3] bg-[#f1f3f4] px-[28px]">
        <MdLock size={34} className="shrink-0 text-[#5f6368]" />
        <p className="ml-[24px] text-[33px] whitespace-nowrap text-[#80868b]">
          <span className="text-[#202124]">connect.mheducation.com</span>/connect/hmEBook.do?action=itemLevel&amp;isbn=1259748685&amp;location=id_1259748685_...
        </p>
      </div>
      <div className="flex min-h-0 flex-1">
        <div className="flex min-w-0 flex-1 flex-col">
          <EbookToolbar />
          <div className="min-h-0 flex-1 overflow-hidden pl-[176px]">
            <article className={`h-full w-[1350px] overflow-hidden border-x-[50px] border-[#0066b3] bg-[#e1e6f5] text-[#2d2d2f] ${SERIF}`}>
              <Fig56 />
              <Caption>Fig. P5.6</Caption>
              <Answer />
              <Fig57 />
              <Caption>Fig. P5.7</Caption>
              <Answer />
              <Fig58 />
              <Caption>Fig. <i className="text-[#dc1e50]">P5.8</i></Caption>
              <p className="mt-[44px] ml-[70px] text-[32px] leading-[36px]">
                <b className="mr-[51px] text-[#0066b3]">5.9 through 5.12</b>
                Locate the centroid of the plane area shown.
              </p>
              <Fig59 />
              <Caption>Fig. P5.9</Caption>
              <Answer />
            </article>
          </div>
          <div className="h-[15px] shrink-0 pr-[400px]"><div className="h-full bg-[#858585]" /></div>
        </div>
        <div className="w-[26px] shrink-0 pt-[1474px]"><div className="h-[88px] bg-[#858585]" /></div>
      </div>
    </section>
  );
}

/* ---------- taskbar ---------- */

function ChromeIcon() {
  const d = "M24 13H45A24 24 0 0 0 4 11L15 29Z";
  return (
    <svg width="56" height="56" viewBox="0 0 48 48">
      <path d={d} fill="#0f9d58" transform="rotate(-120 24 24)" />
      <path d={d} fill="#ffcd40" transform="rotate(120 24 24)" />
      <path d={d} fill="#db4437" />
      <circle cx="24" cy="24" r="11" fill="#f1f1f1" /><circle cx="24" cy="24" r="9" fill="#4285f4" />
    </svg>
  );
}

function TaskButton({ label, children }: { label: string; children: ReactNode }) {
  return <button aria-label={label} className="flex h-full w-[124px] shrink-0 items-center justify-center">{children}</button>;
}

function Taskbar() {
  return (
    <footer className={`flex h-[100px] shrink-0 items-center bg-linear-to-r from-[#cfe7ef] via-[#d3e0ed] via-50% to-[#d5daea] text-black ${UI}`}>
      <button aria-label="Start" className="flex h-full w-[121px] items-center justify-center">
        <svg width="40" height="40" viewBox="0 0 40 40"><path d="M0 6L16 3V19H0ZM18 3L40 0V19H18ZM0 21H16V37L0 34ZM18 21H40V40L18 37Z" /></svg>
      </button>
      <label className="flex h-full w-[857px] items-center border-x-2 border-y-[3px] border-[#ccc] bg-white pl-[28px]">
        <svg width="52" height="52" viewBox="0 0 52 52" fill="none" stroke="#000" strokeWidth="3"><circle cx="33" cy="18" r="15" /><path d="M22 29L2 49" /></svg>
        <input aria-label="Search" placeholder="Type here to search" className="ml-[29px] flex-1 bg-transparent pt-[2px] text-[35px] outline-none placeholder:text-[#2b2b2b] placeholder:opacity-100" />
      </label>
      <TaskButton label="Cortana"><svg width="40" height="40" viewBox="0 0 40 40"><circle cx="20" cy="20" r="17" fill="none" stroke="#000" strokeWidth="5" /></svg></TaskButton>
      <button aria-label="Task view" className="flex h-full w-[120px] shrink-0 items-center justify-center">
        <svg width="40" height="40" viewBox="0 0 40 40" fill="none" stroke="#000" strokeWidth="3">
          <path d="M2 1V8H25V1M2 39V32H25V39M2 12H25V28H2ZM37 1V10M37 20V39" /><circle cx="37" cy="15" r="3" fill="#000" stroke="none" />
        </svg>
      </button>
      <button aria-label="Edge" className="flex h-full w-[128px] shrink-0 items-center justify-center"><FaEdgeLegacy size={54} className="text-[#0078d7]" /></button>
      <TaskButton label="File Explorer">
        <svg width="54" height="48" viewBox="0 0 54 48">
          <path d="M0 2H22L26 8H54V44H0Z" fill="#ffd868" /><path d="M0 0H22L26 6L22 9H0Z" fill="#dea100" /><path d="M0 36H54V44H0Z" fill="#f8c440" />
          <path d="M10 48V28Q10 24 14 24H41Q45 24 45 28V48H35V36H20V48Z" fill="#3f9ade" />
        </svg>
      </TaskButton>
      <TaskButton label="Mail">
        <svg width="60" height="48" viewBox="0 0 60 48"><path d="M0 15L30 0L60 15V48H0Z" fill="#3c4043" /><path d="M3 16H57L34 27L51 42L26 32Z" fill="#d4e4ee" /></svg>
      </TaskButton>
      <button aria-label="Google Chrome" className="flex h-full w-[121px] items-center justify-center border-r-8 border-b-[5px] border-r-[#dfe9f2] border-b-[#0078d7] bg-[#ecf4f8]"><ChromeIcon /></button>
      <div className="ml-auto flex h-full items-center">
        <button aria-label="Show hidden icons" className="mr-[46px]"><svg width="32" height="17" viewBox="0 0 32 17" fill="none" stroke="#000" strokeWidth="2"><path d="M1 16L16 1L31 16" /></svg></button>
        <svg width="39" height="24" viewBox="0 0 39 24" className="mr-[46px]"><rect x="1" y="1" width="34" height="21" fill="none" stroke="#000" strokeWidth="2" /><rect x="5" y="5" width="15" height="13" /><rect x="35" y="7" width="4" height="8" /></svg>
        <svg width="31" height="31" viewBox="0 0 31 31" className="mr-[42px]" fill="none" stroke="#000" strokeWidth="2"><path d="M1 31A29 29 0 0 1 30 1M9 31A21 21 0 0 1 30 9M17 31A13 13 0 0 1 30 18" /><circle cx="27" cy="27" r="3" fill="#000" stroke="none" /></svg>
        <svg width="37" height="30" viewBox="0 0 37 30" className="mr-[40px]" fill="none" stroke="#000" strokeWidth="2"><path d="M1 9H6L13 2V28L6 21H1ZM21 9L35 22M35 9L21 22" /></svg>
        <div className="w-[136px] pt-1 text-center text-[28px] leading-[47px]"><div>1:48 PM</div><div>10/8/2019</div></div>
        <button aria-label="Notifications" className="relative mr-[50px] ml-[46px]">
          <svg width="40" height="44" viewBox="0 0 40 44"><path d="M0 0H40V34H22L16 41V34H0Z" /><path d="M8 9H32M8 17H32M8 25H32" stroke="#d6dcea" strokeWidth="2" /></svg>
          <span className="absolute top-[19px] left-[17px] flex size-[41px] items-center justify-center rounded-full border-2 border-[#555] bg-[#d2d2d4] text-[24px] leading-none font-semibold">6</span>
        </button>
        <div className="mr-[11px] h-full w-[2px] bg-[#a9adbb]" />
      </div>
    </footer>
  );
}

export default function App() {
  return (
    <main className="flex h-screen w-full flex-col overflow-hidden">
      <div className="flex min-h-0 flex-1">
        <PdfWindow />
        <EbookWindow />
      </div>
      <Taskbar />
    </main>
  );
}
